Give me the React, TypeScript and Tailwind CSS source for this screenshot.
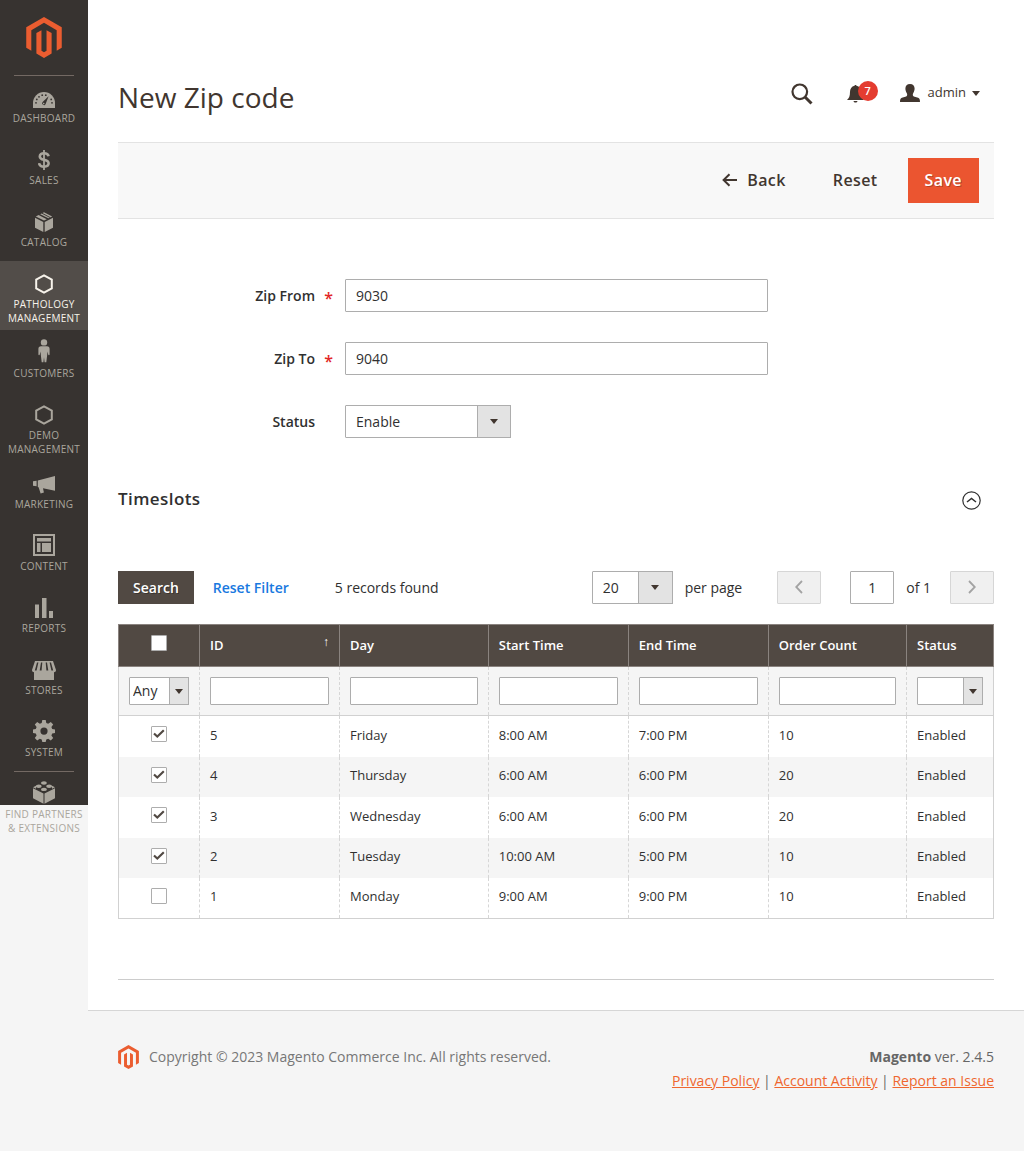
import { useState } from "react";
import type { ReactNode } from "react";

type MenuItem = { label: string; icon: ReactNode; active?: boolean };

const hexagon = (
  <svg width="20" height="20" viewBox="0 0 20 20" fill="none" stroke="currentColor" strokeWidth="2">
    <path d="M10 1.3 17.8 5.6v8.8L10 18.7 2.2 14.4V5.6z" />
  </svg>
);

const menu: MenuItem[] = [
  {
    label: "Dashboard",
    icon: (
      <svg width="22" height="16" viewBox="0 0 22 16">
        <path fill="currentColor" d="M11 0a11 11 0 0 1 11 11v5H0v-5A11 11 0 0 1 11 0z" />
        <g fill="#373330">
          <path d="M15.600 4.200 12.600 12a1.800 1.800 0 1 1-3-1.900z" />
          <circle cx="3" cy="10.800" r=".9" />
          <circle cx="3.800" cy="7.400" r=".9" />
          <circle cx="6" cy="4.800" r=".9" />
          <circle cx="9.200" cy="3.200" r=".9" />
          <circle cx="12.800" cy="3.200" r=".9" />
          <circle cx="18.200" cy="7.400" r=".9" />
          <circle cx="19" cy="10.800" r=".9" />
        </g>
        <circle cx="10.700" cy="11.600" r=".8" fill="currentColor" />
      </svg>
    ),
  },
  {
    label: "Sales",
    icon: (
      <svg width="12" height="20" viewBox="0 0 12 20" fill="none" stroke="currentColor">
        <path strokeWidth="2.600" d="M10.600 6.200C10.200 4.200 8.600 3.300 6 3.300c-2.600 0-4.200 1.100-4.200 3.100C1.800 8.600 3.600 9.200 6 9.800c2.700.6 4.600 1.300 4.600 3.500 0 2.200-1.800 3.300-4.600 3.300-2.900 0-4.600-1.200-4.900-3.400" />
        <path strokeWidth="1.800" d="M6 0v20" />
      </svg>
    ),
  },
  {
    label: "Catalog",
    icon: (
      <svg width="20" height="20" viewBox="0 0 20 20" fill="currentColor">
        <path d="M1 5.800 9.300 9.900V20L1 15.800zM19 5.800 10.700 9.900V20L19 15.800zM1.800 4.400 4.600 3 12.800 7.200 10 8.600zM6.200 2.200 10 .300l8.200 4.100-3.800 1.900z" />
        <path fill="none" stroke="#373330" strokeWidth=".9" d="m7.600 1 8.600 4.600" />
      </svg>
    ),
  },
  { label: "Pathology Management", icon: hexagon, active: true },
  {
    label: "Customers",
    icon: (
      <svg width="12" height="24" viewBox="0 0 12 24" fill="currentColor">
        <circle cx="6" cy="3.400" r="3.200" />
        <path d="M3 7.300h6c1.700 0 2.600 1 2.600 2.600v5.600c0 1-1.300 1-1.400 0l-.7-3-.4 4.300-.8 6.400H6.600L6 18.300l-.6 4.900H3.700l-.8-6.400-.4-4.300-.7 3c-.1 1-1.400 1-1.400 0V9.900C.4 8.300 1.300 7.300 3 7.300z" />
      </svg>
    ),
  },
  { label: "Demo Management", icon: hexagon },
  {
    label: "Marketing",
    icon: (
      <svg width="22" height="18" viewBox="0 0 22 18" fill="currentColor">
        <path d="M0 5.300 3.600 4.700v5.600L0 9.800zM4.800 4.500 22 0v14.800l-12-2.600.9 4.400-3.300 1-2-6.300-.8-.2z" />
      </svg>
    ),
  },
  {
    label: "Content",
    icon: (
      <svg width="22" height="22" viewBox="0 0 22 22" fill="currentColor">
        <path fillRule="evenodd" d="M0 0h22v22H0zM2 2v18h18V2z" />
        <path d="M4 4h14v3.500H4zM4 9h3.500v9H4zM9 9h9v9H9z" />
      </svg>
    ),
  },
  {
    label: "Reports",
    icon: (
      <svg width="20" height="20" viewBox="0 0 20 20" fill="currentColor">
        <path d="M1 6.500h4V20H1zM8 0h4.500v20H8zM15 13h4v7h-4z" />
      </svg>
    ),
  },
  {
    label: "Stores",
    icon: (
      <svg width="24" height="19" viewBox="0 0 24 19">
        <path fill="currentColor" d="M3 0h18l3 9c0 1.600-1 2.200-2 2.200V19H2v-7.800C1 11.200 0 10.600 0 9z" />
        <g fill="#373330">
          <path d="M5 1.500h1.400L4.600 9.500H2.800zM9 1.500h1.300L9.600 9.500H7.700zM13.700 1.500H15l1.300 8h-1.900zM17.600 1.500H19l2.200 8h-1.800z" />
        </g>
      </svg>
    ),
  },
  {
    label: "System",
    icon: (
      <svg width="22" height="22" viewBox="0 0 22 22" fill="currentColor">
        <path
          fillRule="evenodd"
          d="M9.300 0h3.400l.6 3 1.900.8 2.600-1.700 2.400 2.400-1.800 2.600.8 1.900 2.800.6v3.300l-2.800.6-.8 1.900 1.800 2.600-2.400 2.400-2.600-1.700-1.900.8-.6 2.500H9.300l-.6-2.500-1.900-.8-2.600 1.700L1.800 18l1.800-2.600-.8-1.900L0 12.900V9.600L2.800 9l.8-1.900-1.800-2.600 2.400-2.400 2.600 1.700 1.900-.8zM11 7.500a3.600 3.600 0 1 0 0 7.200 3.600 3.600 0 0 0 0-7.200z"
        />
      </svg>
    ),
  },
];

const partners: MenuItem = {
  label: "Find Partners & Extensions",
  icon: (
    <svg width="22" height="23" viewBox="0 0 22 23" fill="currentColor">
      <path d="M0 7.300 10.500 12.500v10.300L0 17.300zM22 7.300 11.500 12.500v10.300L22 17.300z" />
      <path d="M0 6.200 3 4.800v2.900zM22 6.200 19 4.800v2.900z" />
      <ellipse cx="11" cy="2" rx="2.900" ry="1.700" />
      <ellipse cx="5.800" cy="5.200" rx="2.900" ry="1.700" />
      <ellipse cx="16.200" cy="5.200" rx="2.900" ry="1.700" />
      <ellipse cx="11" cy="8.400" rx="2.900" ry="1.700" />
    </svg>
  ),
};

const slots = [
  { id: 5, day: "Friday", start: "8:00 AM", end: "7:00 PM", orders: 10, on: true },
  { id: 4, day: "Thursday", start: "6:00 AM", end: "6:00 PM", orders: 20, on: true },
  { id: 3, day: "Wednesday", start: "6:00 AM", end: "6:00 PM", orders: 20, on: true },
  { id: 2, day: "Tuesday", start: "10:00 AM", end: "5:00 PM", orders: 10, on: true },
  { id: 1, day: "Monday", start: "9:00 AM", end: "9:00 PM", orders: 10, on: false },
];

function Logo({ className }: { className: string }) {
  return (
    <svg viewBox="1.600 0 20.800 24" className={className} fill="#eb5d30" aria-hidden="true">
      <path d="M12 24l-4.455-2.572v-12l2.970-1.715v12.001l1.485.902 1.485-.902V7.713l2.971 1.715v12L12 24zM22.391 6v12l-2.969 1.714V7.713L12 3.430 4.574 7.713v12.001L1.609 18V6L12 0l10.391 6z" />
    </svg>
  );
}

function MenuLink({ item }: { item: MenuItem }) {
  return (
    <a
      href="#"
      className={`flex flex-col px-1 pb-[5px] text-center text-[10px] leading-[14px] tracking-wide uppercase ${
        item.active ? "bg-[#524d49] text-[#f7f3eb]" : "text-[#aaa69d]"
      }`}
    >
      <span className="flex h-9 items-end justify-center pb-[3px]">{item.icon}</span>
      <span className="min-h-[21px]">{item.label}</span>
    </a>
  );
}

function Caret() {
  return (
    <svg width="8" height="5" viewBox="0 0 8 5" fill="#41362f">
      <path d="M0 0h8L4 5z" />
    </svg>
  );
}

type SelectProps = {
  id?: string;
  label?: string;
  options: string[];
  className: string;
  caretClass: string;
};

function Select({ id, label, options, className, caretClass }: SelectProps) {
  return (
    <span className="grid">
      <select
        id={id}
        aria-label={label}
        className={`col-start-1 row-start-1 appearance-none rounded-[1px] border border-[#adadad] bg-white text-[#303030] ${className}`}
      >
        {options.map((o) => (
          <option key={o}>{o}</option>
        ))}
      </select>
      <span
        className={`pointer-events-none col-start-1 row-start-1 flex items-center justify-center justify-self-end border border-[#adadad] bg-[#e3e3e3] ${caretClass}`}
      >
        <Caret />
      </span>
    </span>
  );
}

function Check({ label, checked = false }: { label: string; checked?: boolean }) {
  const [on, setOn] = useState(checked);
  return (
    <span className="mx-auto mb-0.5 grid size-4 place-items-center">
      <input
        type="checkbox"
        aria-label={label}
        checked={on}
        onChange={() => setOn(!on)}
        className="peer col-start-1 row-start-1 size-4 appearance-none rounded-[1px] border border-[#adadad] bg-white"
      />
      <svg
        width="12"
        height="10"
        viewBox="0 0 12 10"
        fill="none"
        stroke="#514943"
        strokeWidth="2.200"
        className="pointer-events-none col-start-1 row-start-1 hidden peer-checked:block"
      >
        <path d="m1 4.500 3.300 3L10.800 1.300" />
      </svg>
    </span>
  );
}

function TextField({ id, label, value }: { id: string; label: string; value: string }) {
  return (
    <div className="grid grid-cols-[227fr_423fr_226fr] items-center">
      <label htmlFor={id} className="flex justify-end text-right font-semibold">
        {label}
        <span className="w-[30px] pt-1 pr-3 text-right text-base leading-4 font-semibold text-[#e22626]">*</span>
      </label>
      <input
        id={id}
        defaultValue={value}
        className="h-[33px] min-w-0 rounded-[1px] border border-[#adadad] px-[10px]"
      />
    </div>
  );
}

function Filter({ label }: { label: string }) {
  return (
    <td className="border-x border-dashed border-[#d6d6d6] px-[10px]">
      <input aria-label={label} className="block h-7 w-full rounded-[1px] border border-[#adadad] bg-white px-1" />
    </td>
  );
}

function Header() {
  return (
    <header className="flex items-center justify-between pt-[75px] pb-[23px] text-[#41362f]">
      <h1 className="text-[28px] leading-[44px]">New Zip code</h1>
      <div className="flex h-9 items-center self-start pr-[14px]">
        <button aria-label="Search" className="mr-[34px] pt-0.5">
          <svg width="22" height="22" viewBox="0 0 22 22" fill="none" stroke="currentColor">
            <circle cx="8.800" cy="8.800" r="7.300" strokeWidth="2.200" />
            <path strokeWidth="3" d="m14 14 6.500 6.500" />
          </svg>
        </button>
        <button aria-label="Notifications" className="relative mr-[36px] pt-0.5">
          <svg width="17" height="18" viewBox="0 0 17 18" fill="currentColor">
            <path d="M7.500.8c0-1 2-1 2 0 3 .7 4.500 3 4.500 6 0 4.500 1 6.500 3 8.200H0c2-1.700 3-3.700 3-8.200 0-3 1.500-5.300 4.500-6zM6.500 16h4c-.4 2-3.600 2-4 0z" />
          </svg>
          <span className="absolute -top-[2px] left-[11px] flex size-5 items-center justify-center rounded-full bg-[#e43c30] text-[11px] font-semibold text-white">
            7
          </span>
        </button>
        <button className="flex items-center text-[13px] leading-[34px] text-[#41362f]">
          <svg width="20" height="18" viewBox="0 0 20 18" fill="currentColor" className="mr-2">
            <path d="M10 0c3 0 4.600 1.800 4.600 4.600 0 1.500-.5 3.200-1.300 4.500-.7 1.200-.8 2.800.5 3.300l4.300 1.400c1.300.5 1.900 1.600 1.900 4.200H0c0-2.600.6-3.700 1.900-4.200l4.300-1.400c1.300-.5 1.200-2.100.5-3.300-.8-1.300-1.300-3-1.300-4.500C5.400 1.800 7 0 10 0z" />
          </svg>
          <span className="pb-0.5">admin</span>
          <span className="ml-[6px]">
            <Caret />
          </span>
        </button>
      </div>
    </header>
  );
}

function Toolbar() {
  const pager = "flex h-[33px] w-11 items-center justify-center rounded-[1px] border border-[#d6d6d6] bg-[#f0f0f0] pb-0.5";
  return (
    <div className="mt-[59px] flex items-center justify-between">
      <div className="flex items-center">
        <button className="h-[33px] bg-[#514943] px-[15px] font-semibold text-white [text-shadow:1px_1px_0_rgba(0,0,0,0.3)]">
          Search
        </button>
        <button className="ml-[19px] font-semibold text-[#1979e0]">Reset Filter</button>
        <span className="ml-[46px]">5 records found</span>
      </div>
      <div className="flex items-center">
        <Select
          id="limit"
          options={["20", "30", "50"]}
          className="h-[33px] w-[81px] pl-[10px] font-medium"
          caretClass="w-[35px]"
        />
        <label htmlFor="limit" className="ml-3">
          per page
        </label>
        <button aria-label="Previous page" className={`ml-[35px] ${pager}`} disabled>
          <svg width="8" height="14" viewBox="0 0 8 14" fill="none" stroke="#a3a3a3" strokeWidth="1.800">
            <path d="M7 1 1.200 7 7 13" />
          </svg>
        </button>
        <input
          aria-label="Page"
          defaultValue="1"
          className="ml-[29px] h-[33px] w-11 rounded-[1px] border border-[#adadad] text-center"
        />
        <span className="ml-3">of 1</span>
        <button aria-label="Next page" className={`ml-[19px] ${pager}`} disabled>
          <svg width="8" height="14" viewBox="0 0 8 14" fill="none" stroke="#a3a3a3" strokeWidth="1.800">
            <path d="M1 1 6.800 7 1 13" />
          </svg>
        </button>
      </div>
    </div>
  );
}

function SlotTable() {
  const th = "border border-[#8a837f] px-[10px] text-left font-semibold";
  const filterTd = "border-x border-dashed border-[#d6d6d6] px-[10px]";
  const td = "border-x border-dashed border-[#d6d6d6] px-[10px] pb-0.5";
  return (
    <table className="mt-5 w-full table-fixed border-collapse border border-[#d1d1d1] text-[13px]">
      <colgroup>
        <col className="w-[81px]" />
        <col className="w-[16%]" />
        <col className="w-[17%]" />
        <col className="w-[16%]" />
        <col className="w-[16%]" />
        <col />
        <col className="w-[87px]" />
      </colgroup>
      <thead className="bg-[#514943] text-white">
        <tr className="h-[42px]">
          <th className="border border-[#8a837f] px-[10px] pb-1">
            <Check label="Select all" />
          </th>
          <th className={th}>
            <span className="flex justify-between">
              ID <span className="text-xs leading-3 font-normal">↑</span>
            </span>
          </th>
          <th className={th}>Day</th>
          <th className={th}>Start Time</th>
          <th className={th}>End Time</th>
          <th className={th}>Order Count</th>
          <th className={th}>Status</th>
        </tr>
      </thead>
      <tbody>
        <tr className="h-[49px] border-b border-[#d1d1d1] bg-[#f5f5f5]">
          <td className={filterTd}>
            <Select
              label="Filter selected"
              options={["Any", "Yes", "No"]}
              className="h-7 w-full pl-[3px] text-sm"
              caretClass="w-5"
            />
          </td>
          <Filter label="Filter ID" />
          <Filter label="Filter day" />
          <Filter label="Filter start time" />
          <Filter label="Filter end time" />
          <Filter label="Filter order count" />
          <td className={filterTd}>
            <Select
              label="Filter status"
              options={["", "Enabled", "Disabled"]}
              className="h-7 w-full pl-[3px] text-sm"
              caretClass="w-5"
            />
          </td>
        </tr>
        {slots.map((s) => (
          <tr key={s.id} className="h-[41px] odd:h-10 odd:bg-[#f5f5f5]">
            <td className={td}>
              <Check label={`Select ${s.day}`} checked={s.on} />
            </td>
            <td className={td}>{s.id}</td>
            <td className={td}>{s.day}</td>
            <td className={td}>{s.start}</td>
            <td className={td}>{s.end}</td>
            <td className={td}>{s.orders}</td>
            <td className={td}>Enabled</td>
          </tr>
        ))}
      </tbody>
    </table>
  );
}

export default function App() {
  return (
    <div className="flex min-h-screen items-start bg-[#f5f5f5] font-['Open_Sans','Noto_Sans',sans-serif] text-sm text-[#303030]">
      <nav className="w-[88px] shrink-0 bg-[#373330]">
        <a href="#" aria-label="Magento" className="flex justify-center pt-[17px] pb-[17px]">
          <Logo className="h-[41px] w-[36px]" />
        </a>
        <div className="mx-[14px] -mb-px h-px bg-[#736963]" />
        {menu.map((item) => (
          <MenuLink key={item.label} item={item} />
        ))}
        <div className="mx-[14px] -mb-px h-px bg-[#736963]" />
        {/* the label hangs out below the dark strip */}
        <div className="-mb-[35px]">
          <MenuLink item={partners} />
        </div>
      </nav>

      <div className="min-w-0 flex-1">
        <main className="border-b border-[#d6d6d6] bg-white px-[30px] pb-[30px]">
          <Header />
          <div className="flex items-center justify-end border-y border-[#e3e3e3] bg-[#f8f8f8] px-[15px] py-[15px] text-base font-semibold tracking-wide text-[#41362f]">
            <button className="flex items-center gap-[10px] pb-0.5">
              <svg width="15" height="14" viewBox="0 0 15 14" fill="none" stroke="currentColor" strokeWidth="2">
                <path d="M15 7H2M7.500 1.200 1.600 7l5.900 5.800" />
              </svg>
              Back
            </button>
            <button className="ml-[47px] pb-0.5">Reset</button>
            <button className="ml-[30px] h-[45px] bg-[#eb5530] px-[17px] pb-0.5 text-white [text-shadow:1px_1px_0_rgba(0,0,0,0.25)]">
              Save
            </button>
          </div>

          <form className="mt-[60px] flex flex-col gap-[30px]">
            <TextField id="zip-from" label="Zip From" value="9030" />
            <TextField id="zip-to" label="Zip To" value="9040" />
            <div className="grid grid-cols-[227fr_423fr_226fr] items-center">
              <label htmlFor="status" className="pr-[30px] text-right font-semibold">
                Status
              </label>
              <div className="flex">
                <Select
                  id="status"
                  options={["Enable", "Disable"]}
                  className="h-[33px] w-[166px] pl-[10px]"
                  caretClass="w-[34px]"
                />
              </div>
            </div>
          </form>

          <div className="mt-12 flex items-center justify-between pr-[13px]">
            <h2 className="text-[17px] leading-[26px] font-semibold tracking-wide">Timeslots</h2>
            <button aria-label="Collapse timeslots" className="pt-0.5">
              <svg width="19" height="19" viewBox="0 0 19 19" fill="none" stroke="#303030" strokeWidth="1.200">
                <circle cx="9.500" cy="9.500" r="8.700" />
                <path strokeWidth="1.500" d="m5 11 4.500-3.500L14 11" />
              </svg>
            </button>
          </div>

          <Toolbar />
          <SlotTable />
          <hr className="mt-[60px] border-[#cccccc]" />
        </main>

        <footer className="flex justify-between px-[30px] pt-[34px] pb-10 leading-6">
          <p className="flex items-start text-[#777777]">
            <Logo className="mr-[10px] h-6 w-[21px]" />
            Copyright © 2023 Magento Commerce Inc. All rights reserved.
          </p>
          <div className="text-right text-[#666666]">
            <p>
              <strong className="font-bold">Magento</strong> ver. 2.4.5
            </p>
            <p>
              <a href="#" className="text-[#ef672f] underline">Privacy Policy</a>
              {" | "}
              <a href="#" className="text-[#ef672f] underline">Account Activity</a>
              {" | "}
              <a href="#" className="text-[#ef672f] underline">Report an Issue</a>
            </p>
          </div>
        </footer>
      </div>
    </div>
  );
}
